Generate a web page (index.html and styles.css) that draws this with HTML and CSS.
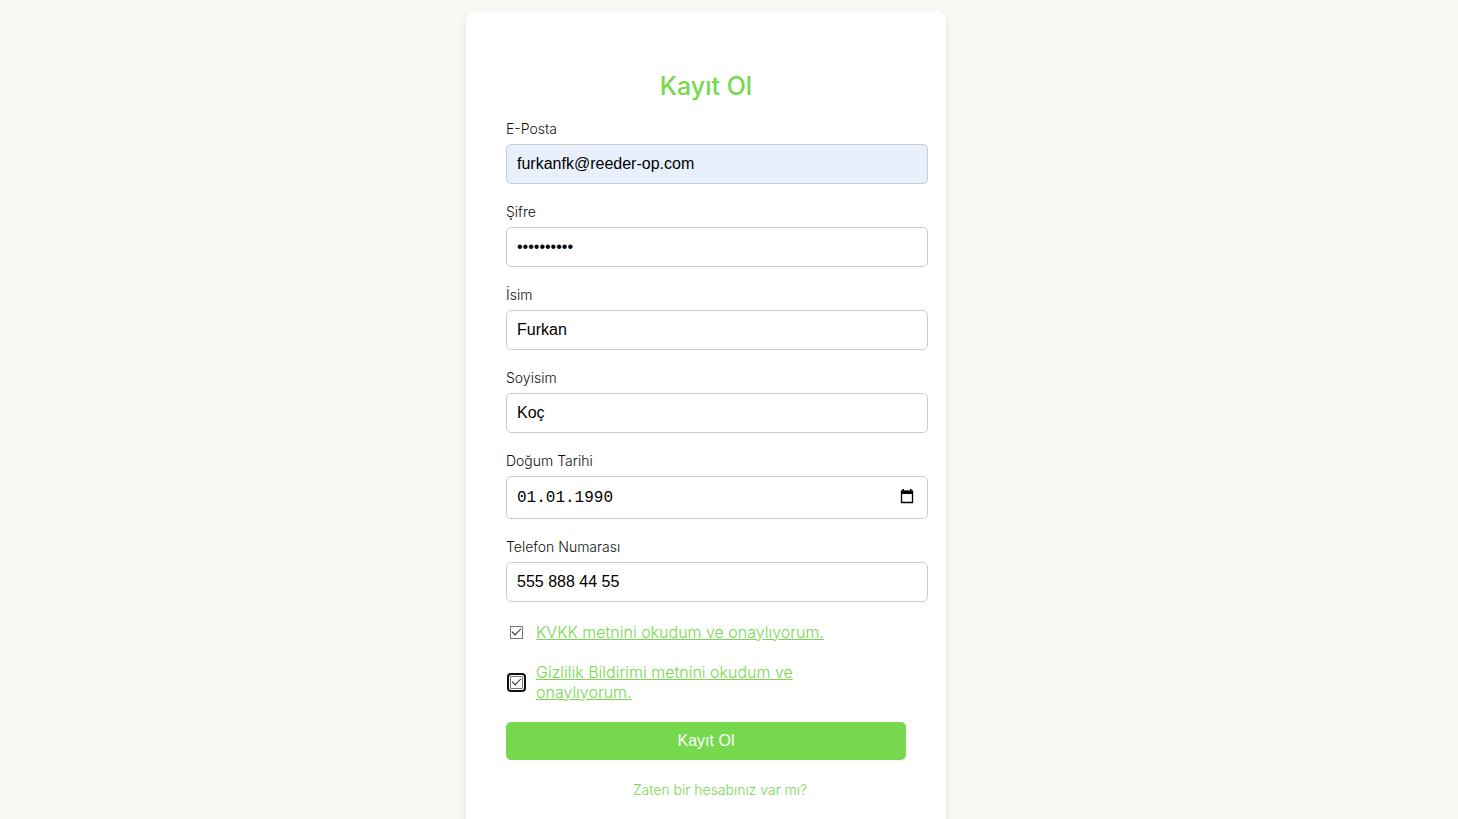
FILE: index.html
```html
<!DOCTYPE html>
<html lang="tr">
<head>
    <meta charset="UTF-8">
    <meta name="viewport" content="width=device-width, initial-scale=1.0">
    <title>Kayıt Ol</title>
    <link rel="stylesheet" href="styles.css">
</head>
<body>
    <div class="container">
        <h2>Kayıt Ol</h2>
        <form action="#" method="post">
            <div class="form-group">
                <label for="email">E-Posta</label>
                <input type="email" id="email" class="autofilled" value="furkanfk@reeder-op.com">
            </div>
            <div class="form-group">
                <label for="password">Şifre</label>
                <input type="password" id="password" value="abcdefghij">
            </div>
            <div class="form-group">
                <label for="name">İsim</label>
                <input type="text" id="name" value="Furkan">
            </div>
            <div class="form-group">
                <label for="surname">Soyisim</label>
                <input type="text" id="surname" value="Koç">
            </div>
            <div class="form-group">
                <label for="birthdate">Doğum Tarihi</label>
                <div class="date-field">
                    <input type="text" id="birthdate" class="date-input" value="01.01.1990">
                    <button type="button" class="date-btn" aria-label="Tarih seç">
                        <svg width="14" height="15" viewBox="0 0 14 15">
                            <path d="M1.500 2.500h11v11h-11z" fill="none" stroke="#000" stroke-width="1.3"/>
                            <path d="M1 1.500h12V5H1zM2.500 0H4v2H2.500zM10 0h1.500v2H10z" fill="#000"/>
                        </svg>
                    </button>
                </div>
            </div>
            <div class="form-group">
                <label for="phone">Telefon Numarası</label>
                <input type="tel" id="phone" value="555 888 44 55">
            </div>
            <div class="checkbox-group">
                <input type="checkbox" id="kvkk" checked>
                <label for="kvkk"><a href="#">KVKK metnini okudum ve onaylıyorum.</a></label>
            </div>
            <div class="checkbox-group">
                <input type="checkbox" id="privacy" checked autofocus>
                <label for="privacy"><a href="#">Gizlilik Bildirimi metnini okudum ve onaylıyorum.</a></label>
            </div>
            <button type="submit" class="submit-btn">Kayıt Ol</button>
        </form>
        <div class="login-link">
            <a href="#">Zaten bir hesabınız var mı?</a>
        </div>
    </div>
</body>
</html>
```

FILE: styles.css
```css
body {
    font-family: "Inter", "Open Sans", sans-serif;
    font-weight: 300;
    background-color: #f9f8f4;
    margin: 0;
    padding: 11px 46px 11px 0;
}

.container {
    max-width: 400px;
    margin: 0 auto;
    padding: 40px;
    background-color: #fff;
    border-radius: 10px;
    box-shadow: 0 4px 8px rgba(0, 0, 0, 0.1);
}

h2 {
    margin: 20px 0;
    font-size: 25px;
    font-weight: 500;
    line-height: 30px;
    text-align: center;
    color: #76d84c;
}

.form-group {
    margin-bottom: 20px;
}

.form-group label {
    display: block;
    margin-bottom: 7px;
    font-size: 14px;
    line-height: 16px;
    color: #111;
}

.form-group input {
    display: block;
    width: 100%;
    height: 18px;
    padding: 10px;
    font-family: "Liberation Sans", Arial, sans-serif;
    font-size: 16px;
    color: #000;
    background-color: #fff;
    border: 1px solid #ccc;
    border-radius: 5px;
}

.form-group .autofilled {
    background-color: #e8f0fe;
}

/* tarih alanı */
.date-field {
    position: relative;
    width: calc(100% + 22px);
}

.form-group .date-input {
    box-sizing: border-box;
    height: 43px;
    font-family: "Liberation Mono", "Courier New", monospace;
}

.date-btn {
    position: absolute;
    top: 0;
    right: 14px;
    display: flex;
    align-items: center;
    height: 41px;
    padding: 0;
    background: none;
    border: none;
    cursor: pointer;
}

/* onay kutuları */
.checkbox-group {
    display: flex;
    align-items: center;
    margin-bottom: 20px;
}

.checkbox-group input {
    appearance: none;
    display: flex;
    flex-shrink: 0;
    align-items: center;
    justify-content: center;
    box-sizing: border-box;
    width: 13px;
    height: 13px;
    margin: 0 13px 0 4px;
    background-color: #fff;
    border: 1px solid #767676;
}

.checkbox-group input:checked::after {
    content: "";
    width: 9px;
    height: 5px;
    margin-bottom: 3px;
    border: solid #222;
    border-width: 0 0 1px 1px;
    box-sizing: border-box;
    transform: rotate(-45deg);
}

.checkbox-group input:focus {
    outline: 2px solid #101010;
    outline-offset: 1px;
    border-radius: 1px;
}

.checkbox-group label {
    max-width: 340px;
    font-size: 16px;
    line-height: 20px;
}

a {
    color: #76d84c;
}

.submit-btn {
    display: block;
    width: 100%;
    padding: 10px;
    font-family: "Liberation Sans", Arial, sans-serif;
    font-size: 16px;
    line-height: 18px;
    color: #fff;
    background-color: #76d84c;
    border: none;
    border-radius: 5px;
    cursor: pointer;
}

.login-link {
    margin-top: 20px;
    padding-left: 28px;
    font-size: 14px;
    line-height: 20px;
    text-align: center;
}

.login-link a {
    text-decoration: none;
}
```
